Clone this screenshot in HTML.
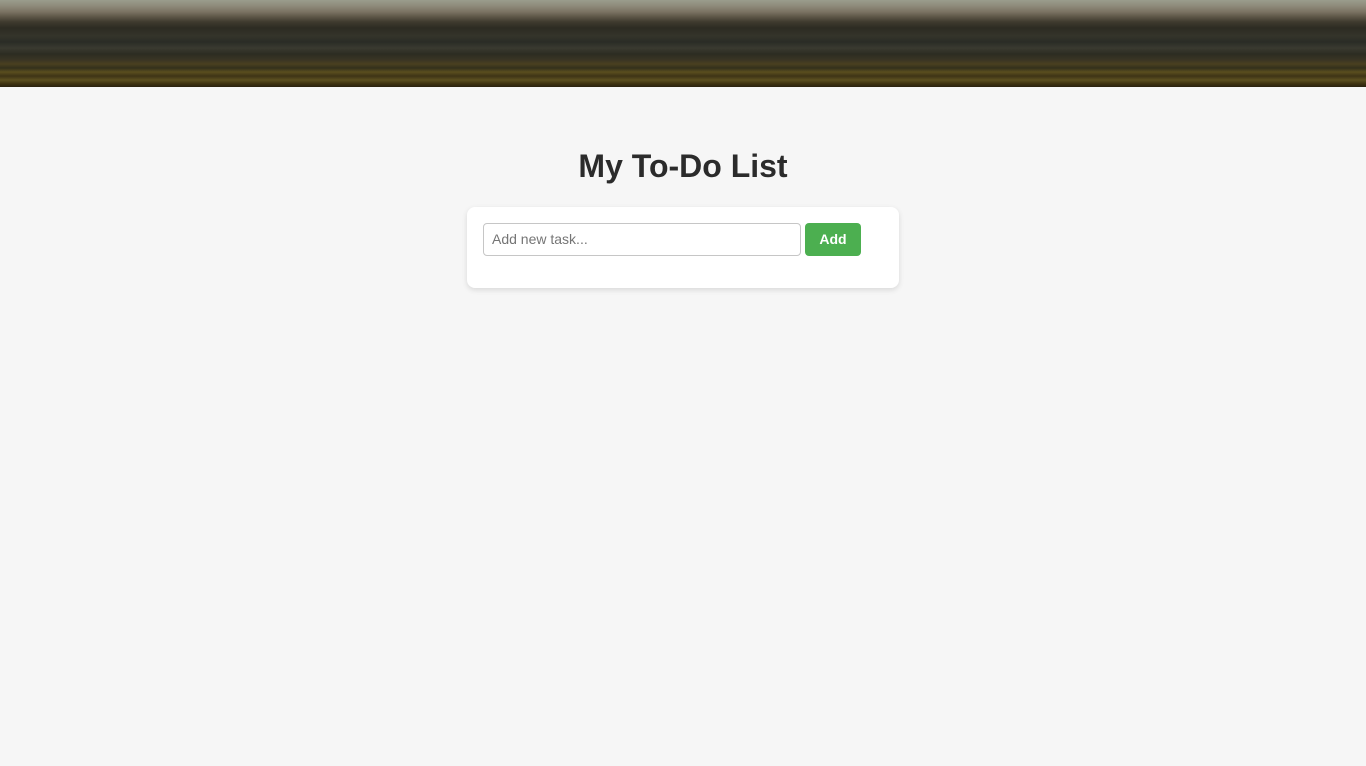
<!DOCTYPE html>
<html><head><style>
html,body{margin:0;padding:0;}
body{background:#f6f6f6;width:1366px;height:766px;overflow:hidden;font-family:"Liberation Sans",Arial,sans-serif;position:relative;}
.banner{position:absolute;left:0;top:0;width:1366px;height:87px;
background:linear-gradient(to bottom,#9a9c8c 0px,#8e8a7a 6px,#7a7262 12px,#5c5546 17px,#3e3a2e 22px,#2c2b22 28px,#34342a 36px,#2a2c26 42px,#3a3a30 48px,#2c2c22 54px,#3a3524 60px,#4a4020 64px,#33301c 68px,#5a4e1e 72px,#3e3416 76px,#5c5020 80px,#3c3010 84px,#2a2210 87px);}
h1{position:absolute;top:148px;left:0;width:1366px;text-align:center;margin:0;font-size:32px;font-weight:bold;color:#2b2b2b;}
.card{position:absolute;left:467px;top:207px;width:432px;height:81px;background:#fff;border-radius:8px;box-shadow:0 2px 6px rgba(0,0,0,0.12);}
.inp{position:absolute;left:16px;top:16px;width:308px;height:31px;border:1px solid #c6c6c6;border-radius:4px;font-size:14px;color:#757575;line-height:31px;padding-left:8px;box-sizing:content-box;}
.btn{position:absolute;left:338px;top:16px;width:56px;height:33px;background:#4caf50;border-radius:4px;color:#fff;font-size:14px;font-weight:bold;text-align:center;line-height:33px;}
</style></head><body>
<div class="banner"></div>
<h1>My To-Do List</h1>
<div class="card"><div class="inp">Add new task...</div><div class="btn">Add</div></div>
</body></html>
